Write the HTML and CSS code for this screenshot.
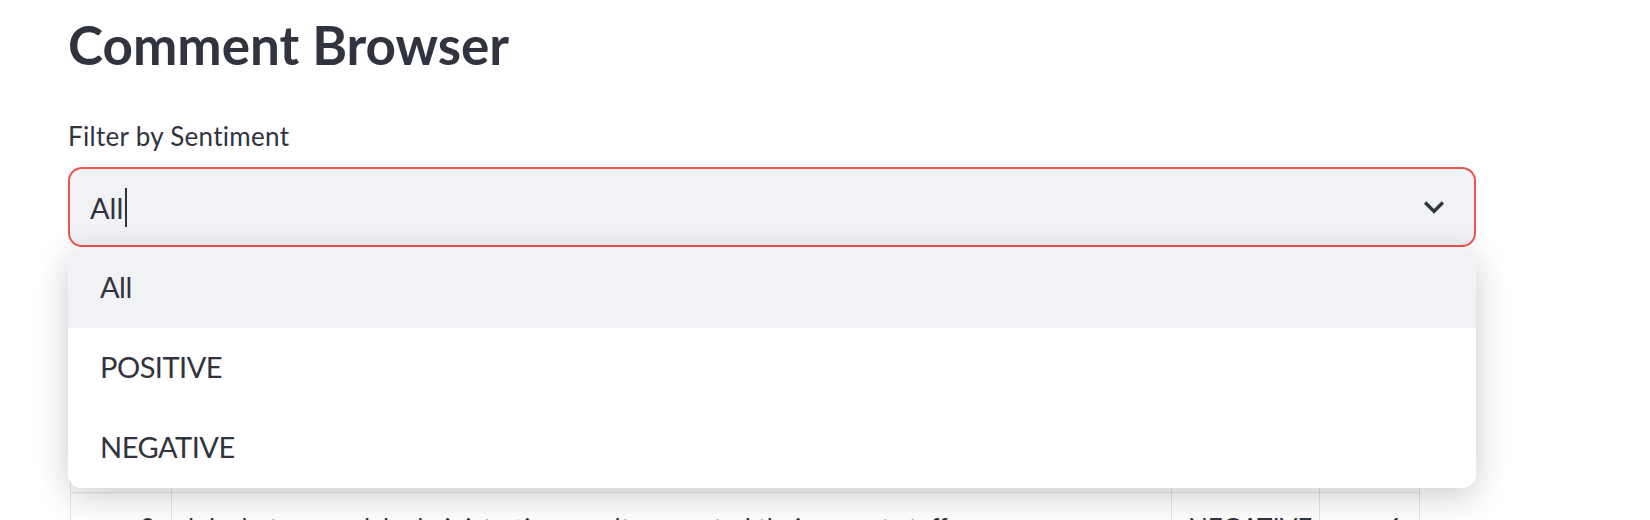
FILE: index.html
```html
<!DOCTYPE html>
<html lang="en">
<head>
<meta charset="utf-8">
<title>Comment Browser</title>
<link rel="stylesheet" href="styles.css">
</head>
<body>
<div class="page">
  <h1 class="title">Comment Browser</h1>
  <div class="label">Filter by Sentiment</div>
  <div class="select-wrap">
    <div class="select">
      <div class="value">All<span class="caret"></span></div>
      <svg class="chev" viewBox="0 0 24 24" aria-hidden="true"><path d="M16.59 8.59L12 13.17 7.41 8.59 6 10l6 6 6-6z"/></svg>
    </div>
    <ul class="menu">
      <li class="opt active">All</li>
      <li class="opt">POSITIVE</li>
      <li class="opt">NEGATIVE</li>
    </ul>
  </div>
  <div class="df">
    <div class="df-row head">
      <div class="cell"></div>
      <div class="cell"></div>
      <div class="cell"></div>
      <div class="cell"></div>
    </div>
    <div class="df-row">
      <div class="cell"></div>
      <div class="cell"></div>
      <div class="cell"></div>
      <div class="cell"></div>
    </div>
    <div class="df-row">
      <div class="cell"></div>
      <div class="cell"></div>
      <div class="cell"></div>
      <div class="cell"></div>
    </div>
    <div class="df-row">
      <div class="cell num">2</div>
      <div class="cell">lol what a scandal administration results exported their expert staff</div>
      <div class="cell">NEGATIVE</div>
      <div class="cell num">1</div>
    </div>
  </div>
</div>
</body>
</html>
```
FILE: styles.css
```css
html, body {
  margin: 0;
  background: #ffffff;
  overflow: hidden;
}

body {
  font-family: Lato, "Open Sans", "Noto Sans", sans-serif;
  color: #31333f;
}

.page {
  width: 1408px;
  margin-left: 68px;
  padding-top: 13px;
}

.title {
  margin: 0;
  font-size: 53px;
  line-height: 64px;
  font-weight: 700;
}

.label {
  margin-top: 43px;
  font-size: 26px;
  line-height: 32px;
  letter-spacing: 0.3px;
}

.select-wrap {
  position: relative;
  margin-top: 15px;
}

.select {
  height: 80px;
  box-sizing: border-box;
  border: 2px solid #ec5650;
  border-radius: 14px;
  background: #f0f2f6;
  display: flex;
  align-items: center;
  padding: 0 20px;
}

.value {
  flex: 1;
  display: flex;
  align-items: center;
  font-size: 29px;
}

.caret {
  width: 0;
  height: 39px;
  border-left: 2px solid #31333f;
  margin-left: 2px;
}

.chev {
  width: 40px;
  height: 40px;
  fill: #31333f;
}

.menu {
  position: absolute;
  top: calc(100% + 1px);
  left: 0;
  right: 0;
  margin: 0;
  padding: 0;
  list-style: none;
  background: #ffffff;
  border-radius: 14px;
  overflow: hidden;
  box-shadow: 0 8px 34px rgba(0, 0, 0, 0.2);
  z-index: 2;
}

.opt {
  height: 80px;
  box-sizing: border-box;
  display: flex;
  align-items: center;
  padding: 0 0 3px 32px;
  font-size: 29px;
  letter-spacing: -0.5px;
}

.opt.active {
  background: #f0f2f6;
}

.df {
  margin: 35px 0 0 2px;
  width: 1350px;
  box-sizing: border-box;
  border-left: 1px solid #e2e2e6;
  border-top: 1px solid #e2e2e6;
}

.df-row {
  display: grid;
  grid-template-columns: 101px 1000px 148px 100px;
}

.cell {
  height: 70px;
  box-sizing: border-box;
  border-right: 1px solid #e2e2e6;
  border-bottom: 1px solid #e2e2e6;
  display: flex;
  align-items: center;
  padding: 0 16px;
  font-size: 26px;
  white-space: nowrap;
  overflow: hidden;
}

.head .cell {
  background: #f8f9fb;
}

.num {
  justify-content: flex-end;
}
```
